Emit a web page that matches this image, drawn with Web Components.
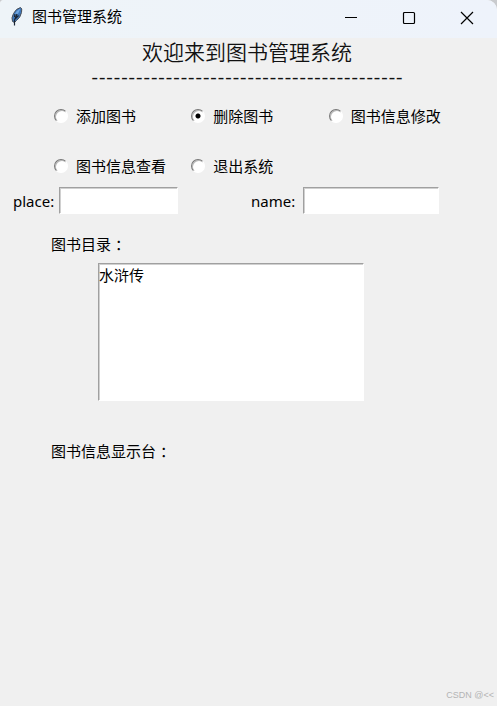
<!DOCTYPE html>
<html lang="zh-CN">
<head>
<meta charset="utf-8">
<meta name="viewport" content="width=device-width, initial-scale=1">
<title>图书管理系统</title>
<style>
body { margin: 0; background: #c9cbce; font: 15px/24px "Noto Sans", "Noto Sans CJK SC", sans-serif; color: #000; }
</style>
</head>
<body>
<library-app></library-app>
<script>
const define = (name, html, setup) => {
  const template = document.createElement('template');
  template.innerHTML = html;
  customElements.define(name, class extends HTMLElement {
    constructor() {
      super();
      this.attachShadow({ mode: 'open' }).append(template.content.cloneNode(true));
    }
    connectedCallback() { if (setup) setup(this, this.shadowRoot); }
  });
};

define('title-bar', `
<style>
:host { display: flex; align-items: center; height: 38px; padding-right: 1px; background: linear-gradient(90deg, #eef4f8, #eef3fb); font-family: "Noto Sans CJK SC", sans-serif; }
.icon { width: 14px; height: 20px; margin: 0 8px 6px 10px; }
h1 { flex: 1; margin: 0 0 6px; font: inherit; }
button { width: 58px; height: 36px; margin-bottom: 2px; padding: 0; border: 0; background: none; display: grid; place-items: center; }
button svg { width: 14px; height: 14px; fill: none; stroke: #000; stroke-width: 1.2; }
</style>
<svg class="icon" viewBox="0 0 14 20" aria-hidden="true">
  <path d="M2.500 15.500Q1 12 3.500 7.500Q6 2.500 10.500 1.500Q12.500 2 11.500 6.500Q10.500 11.500 6.500 14.500L4.500 16.500Z" fill="#3f78ba" stroke="#4b5058" stroke-width="1"/>
  <path d="M5.500 10Q9 7.500 10.500 2.500Q7 4 5 8Z" fill="#6fa5df"/>
  <path d="M4.500 19.500 4.500 14 7 8M5 13 8.500 9.500M4.500 11 5 8" fill="none" stroke="#1a2433" stroke-width="1.200"/>
</svg>
<h1><slot></slot></h1>
<button type="button" aria-label="最小化"><svg viewBox="0 0 14 14"><path d="M1 6.500h12"/></svg></button>
<button type="button" aria-label="最大化"><svg viewBox="0 0 14 14"><rect x="1.500" y="1.500" width="11" height="11" rx="1"/></svg></button>
<button type="button" aria-label="关闭"><svg viewBox="0 0 14 14"><path d="M1 1l12 12M13 1 1 13"/></svg></button>
`);

define('page-heading', `
<style>
:host { display: block; padding-right: 3px; text-align: center; color: #111; }
h2 { margin: 0; font: 350 21px/26px "Noto Sans CJK SC", sans-serif; }
div { font: 20px/24px Lato, sans-serif; white-space: nowrap; }
</style>
<h2><slot></slot></h2>
<div aria-hidden="true">------------------------------------------</div>
`);

define('action-picker', `
<style>
fieldset { display: grid; grid-template-columns: repeat(3, 31%); row-gap: 26px; margin: 0; padding: 0; border: 0; }
label { display: flex; align-items: center; gap: 8px; white-space: nowrap; }
input { appearance: none; flex: none; width: 14px; height: 14px; margin: 0; border: 1px solid; border-color: #777 #fff #fff #777; border-radius: 50%; background: #fff; box-shadow: inset 1px 1px #b8b8b8; }
input:checked { background: radial-gradient(circle, #000 2px, #fff 3px); }
</style>
<fieldset aria-label="操作"></fieldset>
`, (host, root) => {
  const set = root.querySelector('fieldset');
  set.replaceChildren();
  host.getAttribute('options').split(',').forEach((text, i) => {
    const label = document.createElement('label');
    const input = document.createElement('input');
    input.type = 'radio';
    input.name = 'action';
    input.checked = i === Number(host.getAttribute('selected'));
    label.append(input, text);
    set.append(label);
  });
});

define('text-field', `
<style>
:host { display: flex; align-items: center; min-width: 0; }
label { flex: none; }
input { flex: 1; width: 0; min-width: 0; height: 27px; box-sizing: border-box; padding: 0 4px; font: inherit; background: #fff; border: 1px solid; border-color: #a0a0a0 #fff #fff #a0a0a0; border-radius: 0; box-shadow: inset 1px 1px #d0d0d0; margin: 0 0 0 var(--field-gap, 5px); }
</style>
<label for="box"><slot></slot></label><input id="box" type="text">
`);

define('book-list', `
<style>
:host { display: block; }
label { display: block; padding-left: 51px; }
select { display: block; box-sizing: border-box; width: 53.500%; height: 138px; margin: 7px 0 0 98px; padding: 0; border: 1px solid; border-color: #a0a0a0 #fff #fff #a0a0a0; border-radius: 0; background: #fff; box-shadow: inset 1px 1px #d0d0d0; font: inherit; overflow: hidden; outline: 0; }
option { padding: 0; min-height: 22px; line-height: 22px; color: #000; }
</style>
<label for="books">图书目录 ：</label>
<select id="books" size="6"><option>水浒传</option></select>
`);

define('library-app', `
<style>
:host { display: flex; flex-direction: column; min-height: 100vh; background: #f0f0f0; border-radius: 4px 10px 0 0; overflow: hidden; }
main { flex: 1; display: flex; flex-direction: column; }
action-picker { display: block; padding: 16px 0 0 54px; }
.fields { display: grid; grid-template-columns: minmax(0, 165fr) minmax(0, 188fr); column-gap: 73px; padding: 9px 58px 0 13px; }
.fields text-field:last-child { --field-gap: 8px; }
book-list { margin-top: 18px; }
p { margin: 38px 0 0 51px; }
footer { margin-top: auto; padding: 0 3px 3px; text-align: right; font: 9px/16px "Liberation Sans", sans-serif; color: #b4b4b4; }
</style>
<title-bar>图书管理系统</title-bar>
<main>
  <page-heading>欢迎来到图书管理系统</page-heading>
  <action-picker options="添加图书,删除图书,图书信息修改,图书信息查看,退出系统" selected="1"></action-picker>
  <div class="fields"><text-field>place:</text-field><text-field>name:</text-field></div>
  <book-list></book-list>
  <p>图书信息显示台 ：</p>
  <footer>CSDN @&lt;&lt;</footer>
</main>
`);
</script>
</body>
</html>
